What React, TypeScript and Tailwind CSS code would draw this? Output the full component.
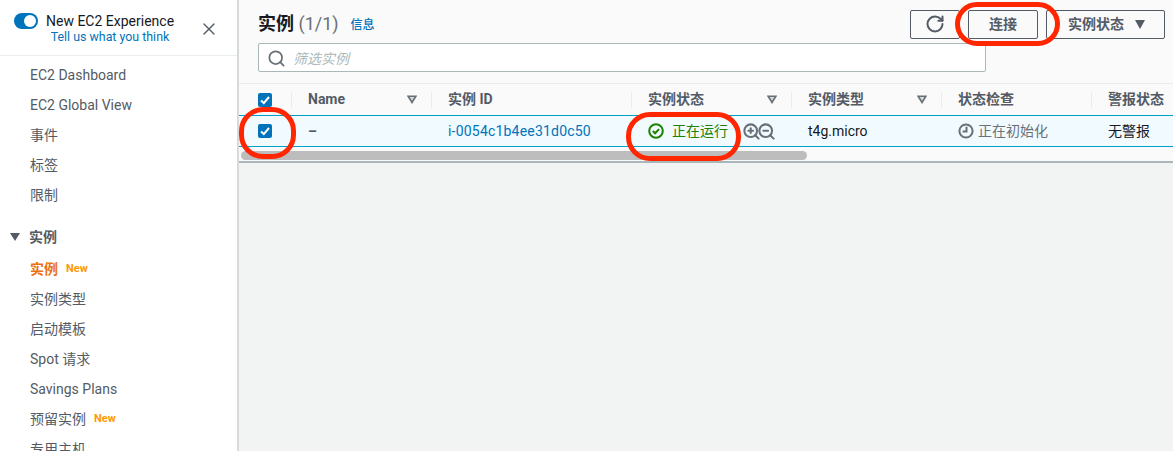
import { RotateCw, Search, X, ZoomIn, ZoomOut } from 'lucide-react'

const font = 'font-["Roboto","Noto_Sans_CJK_SC",sans-serif]'

const topLinks = ['EC2 Dashboard', 'EC2 Global View', '事件', '标签', '限制']
const instanceLinks = [
  { label: '实例', isNew: true, active: true },
  { label: '实例类型' },
  { label: '启动模板' },
  { label: 'Spot 请求' },
  { label: 'Savings Plans' },
  { label: '预留实例', isNew: true },
  { label: '专用主机' },
]

const columns = [
  { label: 'Name', width: 'w-[140px]', filter: true },
  { label: '实例 ID', width: 'w-[200px]' },
  { label: '实例状态', width: 'w-[160px]', filter: true },
  { label: '实例类型', width: 'w-[150px]', filter: true },
  { label: '状态检查', width: 'w-[150px]' },
  { label: '警报状态', width: 'w-[150px]' },
]

function Check() {
  return (
    <span className="flex h-[14px] w-[14px] items-center justify-center rounded-[2px] bg-[#0073bb]">
      <svg viewBox="0 0 14 14" className="h-[14px] w-[14px]" fill="none" stroke="white" strokeWidth="2">
        <path d="M3 7.5l2.8 2.6L11 4" />
      </svg>
    </span>
  )
}

function FilterArrow() {
  return (
    <svg viewBox="0 0 12 10" className="h-[9px] w-[10px]" fill="#d5dbdb" stroke="#687078" strokeWidth="2">
      <path d="M1.4 1.1h9.2L6 8.4z" />
    </svg>
  )
}

function ClockIcon() {
  return (
    <svg viewBox="0 0 16 16" className="mr-[4px] h-[16px] w-[16px]" fill="none" stroke="#687078" strokeWidth="2">
      <circle cx="8" cy="8" r="6.6" />
      <path d="M8.5 3.8v4.7H4.6" />
    </svg>
  )
}

function RunningIcon() {
  return (
    <svg viewBox="0 0 16 16" className="h-[16px] w-[16px]" fill="none" stroke="#1d8102" strokeWidth="2">
      <circle cx="8" cy="8" r="6.8" />
      <path d="M4.8 8l2.3 2.3 4-4.2" />
    </svg>
  )
}

function Sidebar() {
  return (
    <aside className="h-full w-[239px] shrink-0 overflow-hidden border-r-2 border-[#d5dbdb] bg-white">
      <div className="flex h-[56px] items-start border-b border-[#eaeded] pl-[14px]">
        <span className="mt-[13px] flex h-[16px] w-[24px] items-center justify-end rounded-full bg-[#0073bb] pr-[2px]">
          <span className="h-[12px] w-[12px] rounded-full bg-white" />
        </span>
        <div className="ml-[8px] w-[128px] whitespace-nowrap text-center">
          <div className="mt-[12px] text-[14px] leading-[18px] text-[#16191f]">New EC2 Experience</div>
          <div className="text-[12.4px] leading-[14px] text-[#0073bb]">Tell us what you think</div>
        </div>
        <X className="ml-[25px] mt-[19px] h-[20px] w-[20px] text-[#545b64]" strokeWidth={1.6} />
      </div>
      <ul className="pt-[4px]">
        {topLinks.map(l => (
          <li key={l} className="flex h-[30px] items-center pl-[30px] text-[14px] text-[#545b64]">{l}</li>
        ))}
      </ul>
      <div className="mt-[12px] flex h-[30px] items-center pl-[10px] text-[14px] font-bold text-[#545b64]">
        <span className="mr-[9px] h-0 w-0 border-x-[5px] border-t-[8px] border-x-transparent border-t-[#545b64]" />
        实例
      </div>
      <ul className="pt-[2px]">
        {instanceLinks.map(l => (
          <li key={l.label} className={`flex h-[30px] items-center pl-[30px] text-[14px] ${l.active ? 'font-bold text-[#ec7211]' : 'text-[#545b64]'}`}>
            {l.label}
            {l.isNew && <span className="ml-[8px] text-[11px] font-bold text-[#ff9900]">New</span>}
          </li>
        ))}
      </ul>
    </aside>
  )
}

function Toolbar() {
  return (
    <div className="h-[84px] border-b border-[#eaeded] pl-[19px] pr-[8px] pt-[9px]">
      <div className="flex h-[30px] items-center">
        <h1 className="text-[18px] font-bold leading-[28px] text-[#16191f]">
          实例 <span className="font-normal text-[#687078]">(1/1)</span>
        </h1>
        <span className="ml-[12px] mt-[2px] text-[12px] font-medium text-[#0073bb]">信息</span>
        <div className="ml-auto flex items-center">
          <button className="flex h-[29px] w-[50px] items-center justify-start rounded-[2px] border border-[#545b64] pl-[14px]">
            <RotateCw className="h-[20px] w-[20px] text-[#545b64]" strokeWidth={2.4} />
          </button>
          <button className="ml-[8px] h-[29px] w-[70px] rounded-[2px] border border-[#545b64] text-[14px] font-semibold text-[#545b64]">连接</button>
          <button className="ml-[8px] flex h-[29px] w-[119px] items-center rounded-[2px] border border-[#545b64] pl-[21px] text-[14px] font-semibold text-[#545b64]">
            实例状态
            <span className="ml-[11px] h-0 w-0 border-x-[5px] border-t-[9px] border-x-transparent border-t-[#545b64]" />
          </button>
        </div>
      </div>
      <div className="mt-[4px] flex h-[29px] w-[728px] items-center rounded-[2px] border border-[#aab7b8] bg-white pl-[8px]">
        <Search className="mt-[1px] h-[19px] w-[19px] text-[#687078]" strokeWidth={2.2} />
        <span className="ml-[7px] pt-[3px] text-[14px] italic text-[#aab7b8]">筛选实例</span>
      </div>
    </div>
  )
}

function Table() {
  return (
    <div className="h-[79px] overflow-hidden border-b-2 border-[#aab7b8] bg-[#fafafa]">
      <div className="flex h-[31px] items-center text-[14px] font-bold text-[#545b64]">
        <div className="flex h-[16px] w-[53px] shrink-0 items-center border-r border-[#eaeded] pl-[19px]"><Check /></div>
        {columns.map(c => (
          <div key={c.label} className={`flex h-[16px] shrink-0 items-center justify-between border-r border-[#eaeded] pl-[16px] pr-[14px] ${c.width}`}>
            <span className="whitespace-nowrap">{c.label}</span>
            {c.filter && <FilterArrow />}
          </div>
        ))}
      </div>
      <div className="flex h-[32px] items-center border-y border-[#00a1c9] bg-[#f1faff] text-[14px] text-[#16191f]">
        <div className="w-[53px] pl-[19px]"><Check /></div>
        <div className="w-[140px] pl-[16px] font-bold text-[#545b64]">–</div>
        <div className="w-[200px] pl-[16px] tracking-[0.2px] text-[#0073bb]">i-0054c1b4ee31d0c50</div>
        <div className="flex w-[160px] items-center pl-[16px]">
          <RunningIcon />
          <span className="ml-[8px] text-[#1d8102]">正在运行</span>
          <ZoomIn className="ml-[14px] h-[19px] w-[19px] text-[#687078]" strokeWidth={2.6} />
          <ZoomOut className="-ml-[4px] h-[19px] w-[19px] text-[#687078]" strokeWidth={2.6} />
        </div>
        <div className="w-[150px] pl-[16px]">t4g.micro</div>
        <div className="flex w-[150px] items-center pl-[16px] text-[#687078]">
          <ClockIcon />
          正在初始化
        </div>
        <div className="pl-[16px]">无警报</div>
      </div>
      <div className="ml-[2px] mt-[4px] h-[9px] w-[566px] rounded-full bg-[#bdbdbd]" />
    </div>
  )
}

export default function App() {
  return (
    <div className={`relative flex h-[451px] w-[1173px] overflow-hidden bg-[#f2f3f3] ${font}`}>
      <Sidebar />
      <main className="min-w-0 flex-1 overflow-hidden">
        <div className="bg-[#fafafa]">
          <Toolbar />
          <Table />
        </div>
      </main>
      {/* red annotation rings drawn over the screenshot */}
      <span className="absolute left-[239px] top-[107px] h-[52px] w-[57px] rounded-[24px] border-[5px] border-[#ff2600]" />
      <span className="absolute left-[626px] top-[112px] h-[49px] w-[115px] rounded-[24px] border-[5px] border-[#ff2600]" />
      <span className="absolute left-[955px] top-[2px] h-[44px] w-[105px] rounded-[22px] border-[5px] border-[#ff2600]" />
    </div>
  )
}
